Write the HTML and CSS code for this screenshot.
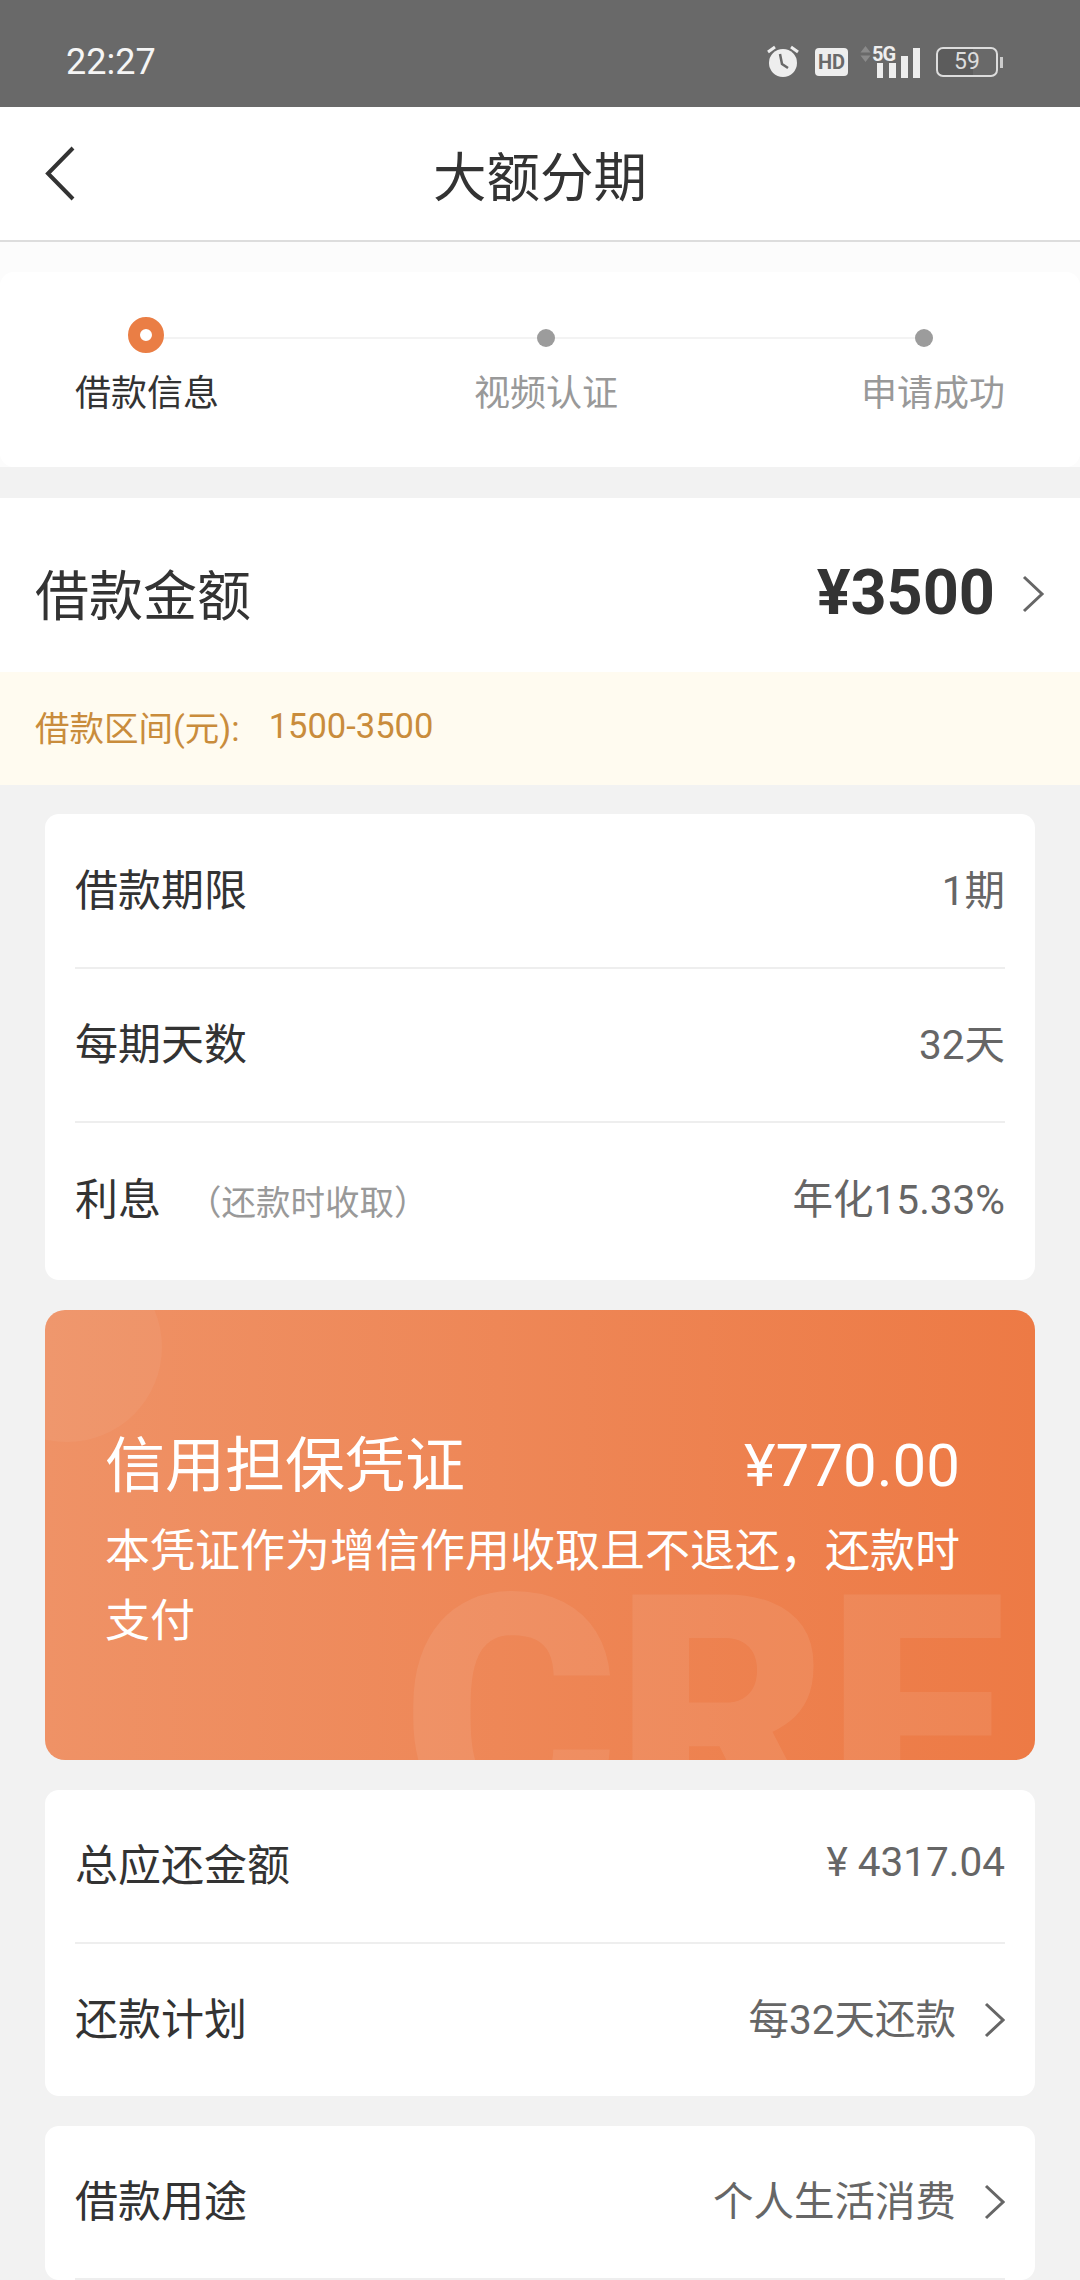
FILE: index.html
```html
<!DOCTYPE html>
<html lang="zh-CN">
<head>
    <meta charset="UTF-8">
    <title>大额分期</title>
    <link rel="stylesheet" href="styles.css">
</head>
<body>
<div class="status">
    <span class="time">22:27</span>
    <svg class="alarm" width="34" height="34" viewBox="0 0 34 34">
        <circle cx="17" cy="19" r="14" fill="#eee"/>
        <path d="M14 10l2 10 6 4" fill="none" stroke="#696969" stroke-width="2.5"/>
        <path d="M2 8l7-5M32 8l-7-5" fill="none" stroke="#eee" stroke-width="3"/>
    </svg>
    <span class="hd">HD</span>
    <div class="signal">
        <svg class="arrows" width="11" height="16" viewBox="0 0 11 16">
            <path d="M5.500 0l5 6.500H.5zM5.500 16l5-6.500H.5z" fill="#8a8a8a"/>
        </svg>
        <span class="five_g">5G</span>
        <svg class="bars" width="43" height="30" viewBox="0 0 43 30">
            <rect x="0" y="15" width="6" height="15" fill="#eee"/>
            <rect x="12" y="15" width="7" height="15" fill="#eee"/>
            <rect x="24" y="8" width="7" height="22" fill="#eee"/>
            <rect x="36" y="0" width="7" height="30" fill="#eee"/>
        </svg>
    </div>
    <div class="battery"><span>59</span></div>
    <i class="battery_tip"></i>
</div>

<div class="nav">
    <svg class="back" width="31" height="55" viewBox="0 0 31 55">
        <path d="M29 2L4 27.500 29 53" fill="none" stroke="#333" stroke-width="4"/>
    </svg>
    <h1>大额分期</h1>
</div>

<div class="steps_wrap">
    <div class="steps">
        <div class="track">
            <i class="dot dot_on"></i>
            <i class="line line_a"></i>
            <i class="dot"></i>
            <i class="line line_b"></i>
            <i class="dot"></i>
        </div>
        <div class="labels">
            <span class="on">借款信息</span>
            <span class="label_mid">视频认证</span>
            <span class="label_end">申请成功</span>
        </div>
    </div>
</div>

<div class="amount">
    <span class="amount_name">借款金额</span>
    <span class="amount_num">¥3500</span>
    <svg class="arrow_big" width="24" height="38" viewBox="0 0 24 38">
        <path d="M3 2l18 17L3 36" fill="none" stroke="#666" stroke-width="3"/>
    </svg>
</div>
<div class="range">
    <span>借款区间(元):</span>
    <span class="range_num">1500-3500</span>
</div>

<div class="main">
    <div class="card card_first">
        <div class="row">
            <span class="name">借款期限</span>
            <span class="val">1期</span>
        </div>
        <div class="row">
            <span class="name">每期天数</span>
            <span class="val">32天</span>
        </div>
        <div class="row row_end">
            <span class="name">利息<em>（还款时收取）</em></span>
            <span class="val">年化15.33%</span>
        </div>
    </div>

    <div class="credit">
        <i class="credit_circle"></i>
        <span class="credit_mark">CRF</span>
        <div class="credit_top">
            <span class="credit_name">信用担保凭证</span>
            <span class="credit_num">¥770.00</span>
        </div>
        <p>本凭证作为增信作用收取且不退还，还款时支付</p>
    </div>

    <div class="card">
        <div class="row">
            <span class="name">总应还金额</span>
            <span class="val">¥ 4317.04</span>
        </div>
        <div class="row row_end row_short">
            <span class="name">还款计划</span>
            <span class="val">每32天还款</span>
            <svg class="arrow" width="21" height="36" viewBox="0 0 21 36">
                <path d="M2 2l17 16L2 34" fill="none" stroke="#666" stroke-width="3"/>
            </svg>
        </div>
    </div>

    <div class="card">
        <div class="row">
            <span class="name">借款用途</span>
            <span class="val">个人生活消费</span>
            <svg class="arrow" width="21" height="36" viewBox="0 0 21 36">
                <path d="M2 2l17 16L2 34" fill="none" stroke="#666" stroke-width="3"/>
            </svg>
        </div>
    </div>
</div>
</body>
</html>
```
FILE: styles.css
```css
*{
    margin: 0;
    padding: 0;
    box-sizing: border-box;
}
html,body{
    height: 2280px;
    overflow: hidden;
}
body{
    background: #f2f2f2;
    font-family: Roboto, "Noto Sans CJK SC", sans-serif;
    color: #333;
}
i,em{
    font-style: normal;
}

/* status bar */
.status{
    display: flex;
    align-items: center;
    height: 107px;
    padding: 17px 77px 0 66px;
    background: #696969;
    color: #eee;
}
.time{
    margin-right: auto;
    font-size: 36px;
    color: #f5f5f5;
}
.alarm{
    margin-bottom: 3px;
}
.hd{
    width: 33px;
    height: 28px;
    margin-left: 15px;
    border-radius: 4px;
    background: #eee;
    color: #696969;
    font-size: 20px;
    font-weight: 700;
    line-height: 28px;
    text-align: center;
}
.signal{
    position: relative;
    width: 60px;
    height: 32px;
    margin-left: 12px;
}
.arrows{
    position: absolute;
    left: 0;
    top: 0;
}
.five_g{
    position: absolute;
    left: 12px;
    top: -2px;
    font-size: 20px;
    font-weight: 700;
    line-height: 20px;
    letter-spacing: -1px;
}
.bars{
    position: absolute;
    left: 17px;
    top: 2px;
}
.battery{
    width: 62px;
    height: 30px;
    margin-left: 16px;
    border: 2px solid #ddd;
    border-radius: 7px;
    background: linear-gradient(90deg, #5c5c5c 0, #5c5c5c 60%, transparent 60%);
    font-size: 23px;
    line-height: 26px;
    text-align: center;
    color: #ddd;
}
.battery_tip{
    width: 3px;
    height: 11px;
    margin-left: 2px;
    background: #ccc;
}

/* nav */
.nav{
    display: grid;
    grid-template-columns: 1fr auto 1fr;
    align-items: center;
    height: 135px;
    padding-left: 44px;
    padding-right: 44px;
    border-bottom: 2px solid #ddd;
    background: #fff;
}
.nav h1{
    font-size: 53.500px;
    font-weight: 400;
    color: #333;
}

/* steps */
.steps_wrap{
    padding-top: 30px;
    background: #fcfcfc;
}
.steps{
    height: 195px;
    padding-top: 45px;
    border-radius: 14px;
    background: #fff;
}
.track{
    display: flex;
    align-items: center;
    padding-left: 128px;
}
.dot{
    width: 18px;
    height: 18px;
    border-radius: 50%;
    background: #9c9c9c;
}
.dot_on{
    width: 36px;
    height: 36px;
    margin-bottom: 6px;
    border: 12px solid #ea7e45;
    background: #fff;
}
.line{
    height: 2px;
    background: #f3f3f3;
}
.line_a{
    width: 373px;
}
.line_b{
    width: 360px;
}
.labels{
    display: flex;
    margin-top: 10px;
    padding: 0 75px;
    font-size: 36px;
    line-height: 50px;
    color: #999;
}
.labels .on{
    color: #333;
}
.label_mid{
    margin-left: 255px;
}
.label_end{
    margin-left: auto;
}

/* amount */
.amount{
    display: flex;
    align-items: center;
    height: 174px;
    margin-top: 31px;
    padding: 14px 35px 0;
    background: #fff;
}
.amount_name{
    font-size: 54px;
}
.amount_num{
    margin-left: auto;
    font-size: 63px;
    font-weight: 700;
}
.arrow_big{
    margin-left: 26px;
    margin-top: 4px;
}
.range{
    display: flex;
    align-items: center;
    height: 113px;
    padding: 0 0 6px 35px;
    background: #fffbf0;
    color: #c98c3c;
    font-size: 34.500px;
}
.range_num{
    margin-left: 29px;
}

/* cards */
.main{
    display: flex;
    flex-direction: column;
    gap: 30px;
    padding: 29px 45px 0;
}
.card{
    padding: 0 30px;
    border-radius: 14px;
    background: #fff;
}
.card_first{
    padding-top: 1px;
    padding-bottom: 3px;
}
.row{
    display: flex;
    align-items: center;
    height: 154px;
    padding-bottom: 8px;
    border-bottom: 2px solid #eee;
}
.row_end{
    border-bottom: 0;
}
.row_short{
    height: 152px;
}
.name{
    margin-right: auto;
    font-size: 43px;
}
.name em{
    margin-left: 26px;
    font-size: 34.500px;
    color: #999;
}
.val{
    font-size: 40.500px;
    color: #666;
}
.arrow{
    margin-top: 8px;
    margin-left: 28px;
}

/* orange block */
.credit{
    position: relative;
    height: 450px;
    padding: 120px 60px 0;
    overflow: hidden;
    border-radius: 20px;
    background: linear-gradient(90deg, #ef9266, #ed7a45);
    color: #fff;
}
.credit_circle{
    position: absolute;
    left: -73px;
    top: -58px;
    width: 190px;
    height: 190px;
    border-radius: 50%;
    background: rgba(255,255,255,.05);
}
.credit_mark{
    position: absolute;
    left: 357px;
    top: 242px;
    font-size: 330px;
    font-weight: 900;
    line-height: 1;
    letter-spacing: -4px;
    color: rgba(255,255,255,.08);
}
.credit_top{
    position: relative;
    display: flex;
    justify-content: space-between;
    align-items: center;
    height: 70px;
    padding-right: 15px;
}
.credit_name{
    margin-bottom: 10px;
    font-size: 60px;
}
.credit_num{
    font-size: 60px;
}
.credit p{
    position: relative;
    margin-top: 17px;
    font-size: 45px;
    line-height: 70px;
}
```
